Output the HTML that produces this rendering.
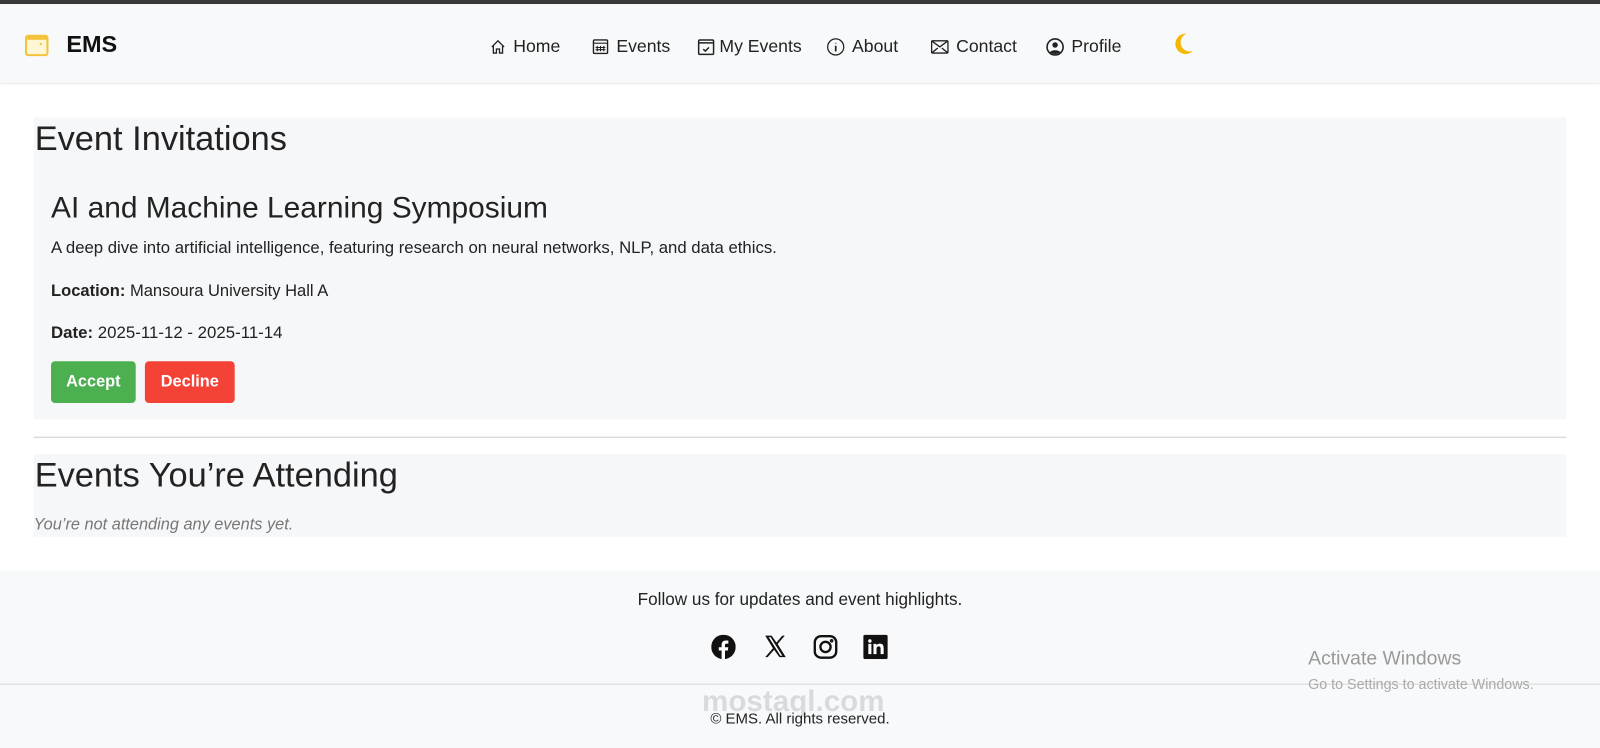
<!DOCTYPE html>
<html><head><meta charset="utf-8"><style>
*{margin:0;padding:0;box-sizing:border-box}
body{width:1600px;height:733px;overflow:hidden;background:#fff;font-family:"Liberation Sans","DejaVu Sans",sans-serif;color:#222;position:relative}
#w{position:absolute;left:0;top:0;width:1568px;height:718px;transform:scale(1.0204);transform-origin:0 0}
.top{height:4px;background:#3a3a3a}
nav{height:77px;background:#f8f9fa;box-shadow:0 1px 3px rgba(0,0,0,.15);position:relative}
.abs{position:absolute}
.nav a{position:absolute;top:31px;font-size:17.3px;color:#222;display:flex;align-items:center;gap:7px;white-space:nowrap}
.sec{position:absolute;left:33px;width:1502px;background:#f6f7f9}
h2{font-weight:500;font-size:33.7px;color:#222}
.btn{position:absolute;top:354px;height:41px;border-radius:4px;color:#fff;font-weight:bold;font-size:16px;display:flex;align-items:center;justify-content:center}
footer{position:absolute;top:559px;left:0;width:1568px;height:174px;background:#f8f9fa}
</style></head><body><div id="w">
<div class="top"></div>
<nav>
<svg class="abs" style="left:24px;top:28px" width="24" height="24" viewBox="0 0 24 24"><rect x="1.5" y="3" width="21" height="19" rx="2" fill="#fff6d6" stroke="#f5c33b" stroke-width="2"/><rect x="1.5" y="3" width="21" height="4" fill="#f5c33b"/><rect x="15" y="10" width="2" height="2" fill="#f5c33b"/></svg>
<div class="abs" style="left:65px;top:26px;font-size:23px;font-weight:bold;color:#111">EMS</div>
<div class="nav">
<a style="left:480px"><svg width="16" height="16" viewBox="0 0 16 16" fill="none" stroke="#222" stroke-width="1.3"><path d="M2 8L8 2l6 6M3.5 6.5V14h3v-4h3v4h3V6.5"/></svg>Home</a>
<a style="left:580px"><svg width="17" height="17" viewBox="0 0 16 16" fill="none" stroke="#222" stroke-width="1.3"><rect x="1.5" y="2" width="13" height="12.5" rx="1"/><path d="M1.5 5h13M5 7.5v5M8 7.5v5M11 7.5v5M3.5 9h9M3.5 11h9" stroke-width="1"/></svg>Events</a>
<a style="left:683px;gap:4px"><svg width="18" height="18" viewBox="0 0 16 16" fill="none" stroke="#222" stroke-width="1.3"><rect x="1.5" y="2" width="13" height="12.5" rx="1"/><path d="M1.5 4.5h13M5.5 10l1.8 1.6 3.2-3.2"/></svg>My Events</a>
<a style="left:810px"><svg width="18" height="18" viewBox="0 0 16 16" fill="none" stroke="#222" stroke-width="1.1"><circle cx="8" cy="8" r="7"/><path d="M8 7v5M8 4.5v.5" stroke-width="1.5"/></svg>About</a>
<a style="left:912px"><svg width="18" height="14" viewBox="0 0 18 14" fill="none" stroke="#222" stroke-width="1.3"><rect x="1" y="1" width="16" height="12" rx="1"/><path d="M1 1l8 6 8-6M1 13l6-5M17 13l-6-5"/></svg>Contact</a>
<a style="left:1025px"><svg width="18" height="18" viewBox="0 0 16 16"><circle cx="8" cy="8" r="7" fill="none" stroke="#222" stroke-width="1.4"/><circle cx="8" cy="6.3" r="2.4" fill="#222"/><path d="M3.5 12.5c1.5-2.2 7.5-2.2 9 0A7 7 0 0 1 3.5 12.5z" fill="#222"/></svg>Profile</a>
</div>
<svg class="abs" style="left:1150px;top:28px" width="20" height="22" viewBox="0 0 20 22"><path d="M13 1A10 10 0 1 0 19 18 8 8 0 0 1 13 1z" fill="#f5b800"/></svg>
</nav>

<div class="sec" style="top:115px;height:296px">
<h2 style="position:absolute;left:1px;top:2px">Event Invitations</h2>
<div class="abs" style="left:17px;top:72px;font-size:29.3px;color:#222">AI and Machine Learning Symposium</div>
<div class="abs" style="left:17px;top:119px;font-size:16.4px">A deep dive into artificial intelligence, featuring research on neural networks, NLP, and data ethics.</div>
<div class="abs" style="left:17px;top:161px;font-size:16.2px"><b>Location:</b> Mansoura University Hall A</div>
<div class="abs" style="left:17px;top:202px;font-size:16.5px"><b>Date:</b> 2025-11-12 - 2025-11-14</div>
</div>
<div class="btn" style="left:50px;width:83px;background:#4caf50">Accept</div>
<div class="btn" style="left:142px;width:88px;background:#f44336">Decline</div>

<div class="abs" style="left:33px;top:428px;width:1502px;height:1px;background:#ccc"></div>

<div class="sec" style="top:445px;height:81px">
<h2 style="position:absolute;left:1px;top:2px">Events You’re Attending</h2>
<div class="abs" style="left:0;top:61px;font-size:16px;font-style:italic;color:#777">You’re not attending any events yet.</div>
</div>

<footer>
<div class="abs" style="left:0;width:1568px;top:19px;text-align:center;font-size:16.8px;color:#222">Follow us for updates and event highlights.</div>
<svg class="abs" style="left:697px;top:63px" width="24" height="24" viewBox="0 0 24 24"><circle cx="12" cy="12" r="12" fill="#111"/><path d="M13.5 24v-8.5h2.8l.4-3.2h-3.2v-2c0-.9.3-1.6 1.6-1.6h1.7V5.8c-.3 0-1.3-.1-2.5-.1-2.5 0-4.1 1.5-4.1 4.2v2.4H7.4v3.2h2.8V24z" fill="#fff"/></svg>
<svg class="abs" style="left:748px;top:63px" width="23" height="23" viewBox="0 0 24 24"><path d="M2 1h6.5l5 7 6-7h2.5l-7.3 8.5L23 23h-6.5l-5.4-7.6L4.5 23H2l7.9-9.1z M5.5 2.5l12 19h2l-12-19z" fill="#111" fill-rule="evenodd"/></svg>
<svg class="abs" style="left:797px;top:63px" width="24" height="24" viewBox="0 0 24 24" fill="none" stroke="#111" stroke-width="2.3"><rect x="1.5" y="1.5" width="21" height="21" rx="6"/><circle cx="12" cy="12" r="5"/><circle cx="18" cy="6" r=".6" fill="#111"/></svg>
<svg class="abs" style="left:846px;top:63px" width="24" height="24" viewBox="0 0 24 24"><rect width="24" height="24" rx="2" fill="#111"/><path d="M5 9h3v10H5zM6.5 4.5a1.7 1.7 0 1 1 0 3.4 1.7 1.7 0 0 1 0-3.4zM10 9h3v1.5c.5-1 1.7-1.8 3.3-1.8 3 0 3.7 2 3.7 4.6V19h-3v-5c0-1.300-.2-2.6-1.8-2.6S13 12.6 13 14v5h-3z" fill="#fff"/></svg>
<div class="abs" style="left:0;top:111px;width:1568px;height:1px;background:#d6d6d6"></div>
<div class="abs" style="left:0;width:1568px;top:138px;text-align:center;font-size:14.7px;color:#222">© EMS. All rights reserved.</div>
<div class="abs" style="left:688px;top:113px;font-size:29px;font-weight:bold;color:rgba(0,0,0,.12)">mostaql.com</div>
<div class="abs" style="left:1282px;top:76px;font-size:19px;color:#999">Activate Windows</div>
<div class="abs" style="left:1282px;top:103px;font-size:14px;color:#aaa">Go to Settings to activate Windows.</div>
</footer>
</div></body></html>
